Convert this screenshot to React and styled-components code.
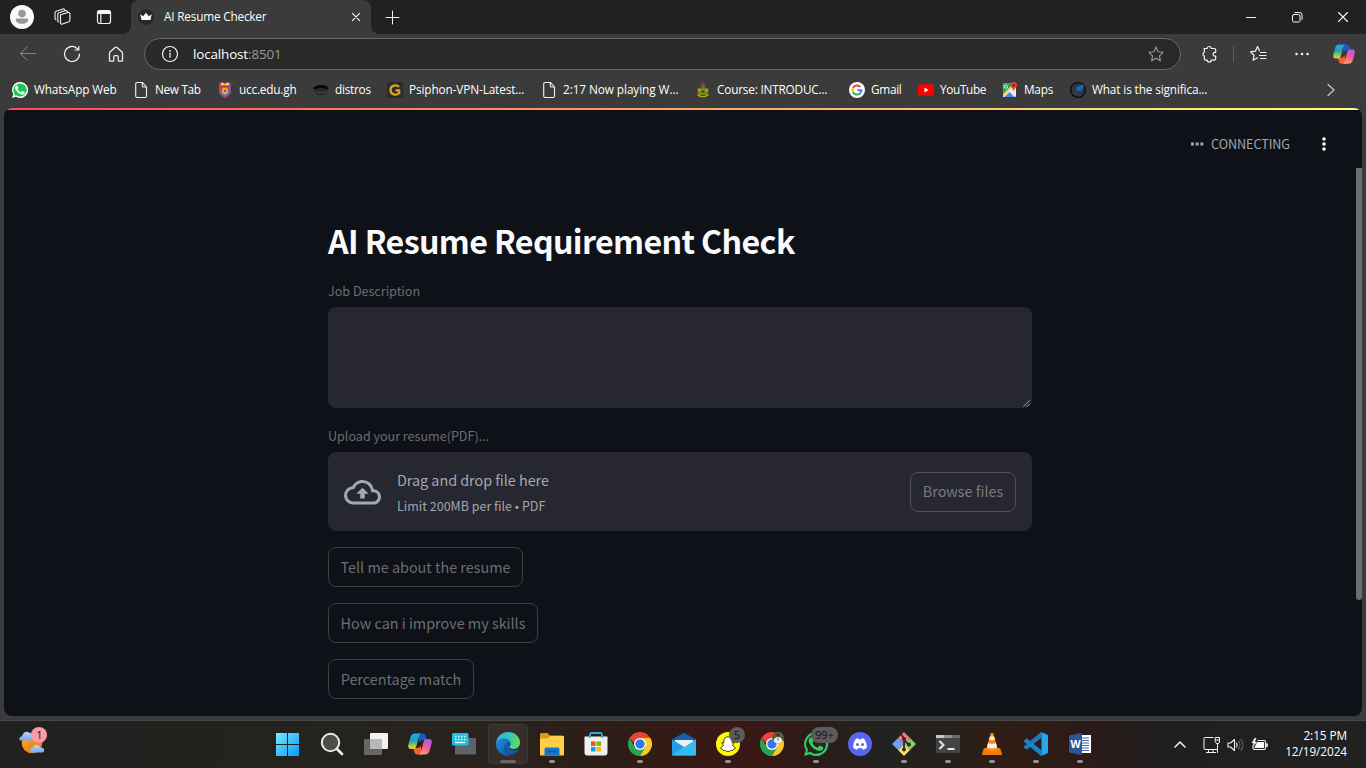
import React from "react";
import styled, { createGlobalStyle, css } from "styled-components";

const ui = `"Open Sans", "Noto Sans", sans-serif`;
const sourceSans = `"Noto Sans CJK JP", "Noto Sans", sans-serif`;

const Global = createGlobalStyle`
  * { box-sizing: border-box; }
  body { margin: 0; background: #3b3b3b; overflow: hidden; }
  svg { display: block; flex: none; overflow: visible; }
  button { font: inherit; color: inherit; background: none; border: 0; padding: 0; }
`;

const Screen = styled.div`
  width: 1366px;
  height: 768px;
  display: flex;
  flex-direction: column;
  background: #3b3b3b;
  color: #fff;
  font-family: ${ui};
  white-space: nowrap;
`;

/* ---------- browser chrome ---------- */

const TabStrip = styled.header`
  height: 34px;
  display: flex;
  align-items: center;
  background: #212121;
`;
const StripButton = styled.button`
  width: ${(p) => p.$w}px;
  height: 34px;
  display: flex;
  align-items: center;
  justify-content: center;
`;
const StripLead = styled.div`
  width: 131px;
  display: flex;
  padding-left: 1px;
`;
const Tab = styled.div`
  position: relative;
  width: 240px;
  height: 34px;
  padding: 0 8px 0 7px;
  display: flex;
  align-items: center;
  background: #3b3b3b;
  border-radius: 8px 8px 0 0;
  &::before,
  &::after {
    content: "";
    position: absolute;
    bottom: 0;
    width: 8px;
    height: 8px;
  }
  &::before {
    left: -8px;
    background: radial-gradient(circle at 0 0, #212121 7.5px, #3b3b3b 8px);
  }
  &::after {
    right: -8px;
    background: radial-gradient(circle at 100% 0, #212121 7.5px, #3b3b3b 8px);
  }
`;
const TabTitle = styled.span`
  flex: 1;
  margin-left: 10px;
  padding-bottom: 2px;
  font-size: 11.8px;
  line-height: 16px;
  letter-spacing: -0.2px;
`;
const WindowControls = styled.div`
  margin-left: auto;
  display: flex;
`;

const Toolbar = styled.div`
  height: 38px;
  padding: 2px 0 0 6px;
  display: flex;
  align-items: center;
`;
const ToolButton = styled.button`
  width: ${(p) => p.$w || 44}px;
  height: 32px;
  padding-left: ${(p) => p.$shift || 0}px;
  display: flex;
  align-items: center;
  justify-content: center;
`;
const AddressBar = styled.div`
  width: 1037px;
  height: 32px;
  margin: 0 0 0 6px;
  padding: 0 16px 0 17px;
  display: flex;
  align-items: center;
  border: 1px solid #686868;
  border-radius: 16px;
  background: #292929;
  font-size: 13.4px;
  line-height: 18px;
  letter-spacing: -0.12px;
`;
const Url = styled.span`
  flex: 1;
  margin-left: 15px;
  span { color: #9a9a9a; }
`;
const Divider = styled.i`
  width: 1px;
  height: 16px;
  background: #5c5c5c;
`;

const BookmarkBar = styled.nav`
  height: 36px;
  padding-left: 12px;
  display: flex;
  align-items: center;
`;
const Bookmark = styled.a`
  width: ${(p) => p.$w}px;
  display: flex;
  align-items: center;
  gap: 6px;
  font-size: 11.8px;
  line-height: 16px;
  letter-spacing: ${(p) => p.$ls}px;
`;
const BookmarkName = styled.span`
  padding-bottom: 2px;
`;

/* ---------- web page ---------- */

const Page = styled.main`
  position: relative;
  height: 608px;
  margin: 0 4px;
  overflow: hidden;
  border-radius: 8px;
  background: #0e1117;
  font-family: ${sourceSans};
`;
const Decoration = styled.div`
  height: 2px;
  background: linear-gradient(90deg, #ff4b4b, #fffd80);
`;
const PageHeader = styled.div`
  height: 58px;
  padding: 10px 26px 0 0;
  display: flex;
  align-items: center;
  justify-content: flex-end;
`;
const Status = styled.span`
  margin: 0 22px 0 7px;
  font-size: 12.6px;
  line-height: 20px;
  letter-spacing: -0.05px;
  color: #a3a8b4;
`;
const Column = styled.section`
  width: 704px;
  margin-left: 324px;
  padding-top: 48px;
  display: flex;
  flex-direction: column;
  align-items: flex-start;
`;
const Title = styled.h1`
  margin: 0 0 18px;
  height: 48px;
  font-size: 32.2px;
  line-height: 48px;
  font-weight: 700;
  letter-spacing: -0.64px;
  color: #fafafa;
`;
const Label = styled.label`
  height: 25px;
  font-size: 12.6px;
  line-height: 17px;
  letter-spacing: -0.02px;
  color: #6c6e72;
`;
const TextArea = styled.div`
  width: 704px;
  height: 101px;
  margin-bottom: 19px;
  padding: 0 2px 1px 0;
  display: flex;
  align-items: flex-end;
  justify-content: flex-end;
  border-radius: 8px;
  background: #262730;
`;
const Dropzone = styled.div`
  width: 704px;
  height: 79px;
  margin-bottom: 16px;
  padding: 0 16px;
  display: flex;
  align-items: center;
  border-radius: 8px;
  background: #262730;
`;
const DropText = styled.div`
  flex: 1;
  margin-left: 16px;
  padding-top: 2px;
  display: flex;
  flex-direction: column;
`;
const DropTitle = styled.span`
  font-size: 14.4px;
  line-height: 26px;
  letter-spacing: -0.04px;
  color: #a3a8b4;
`;
const DropHint = styled.span`
  font-size: 12.5px;
  line-height: 25px;
  color: #a4a5aa;
`;
const ActionButton = styled.button`
  && {
    width: ${(p) => p.$w}px;
    height: 40px;
    margin-bottom: ${(p) => (p.$inset ? 0 : 16)}px;
    padding-bottom: ${(p) => (p.$inset ? 2 : 0)}px;
    border: 1px solid ${(p) => (p.$inset ? "#50515a" : "#3c3f44")};
    border-radius: 8px;
    font-size: 14.4px;
    line-height: 24px;
    color: ${(p) => (p.$inset ? "#797a80" : "#6c6e72")};
  }
`;
const ScrollThumb = styled.div`
  position: absolute;
  right: 0;
  top: 60px;
  width: 6px;
  height: 432px;
  border-radius: 0 0 3px 3px;
  background: #6b6c70;
`;

/* ---------- taskbar ---------- */

const Taskbar = styled.footer`
  height: 48px;
  margin-top: 4px;
  display: flex;
  border-top: 1px solid #474747;
  background: linear-gradient(90deg, #212121 0, #24231e 330px, #29221d 500px, #2e1d16 620px,
    #3a1815 740px, #2c1c18 820px, #212320 885px, #27201c 950px, #2f1d15 1000px, #2b1b19 1095px, #211f1e 1150px, #212121 100%);
`;
const Weather = styled.div`
  width: 266px;
  padding: 6px 0 0 19px;
`;
const TaskbarApp = styled.div`
  position: relative;
  width: 44px;
  height: 47px;
  padding-bottom: 1px;
  display: flex;
  align-items: center;
  justify-content: center;
  ${(p) =>
    p.$active &&
    css`
      &::before {
        content: "";
        position: absolute;
        inset: 3px 2px 4px;
        border: 1px solid #403834;
        border-radius: 4px;
        background: #352e2a;
      }
    `}
  ${(p) =>
    p.$running &&
    css`
      &::after {
        content: "";
        position: absolute;
        bottom: 5px;
        left: ${p.$active ? 14 : 19}px;
        width: ${p.$active ? 16 : 6}px;
        height: 3px;
        border-radius: 2px;
        background: ${p.$active ? "#6a6461" : "#989391"};
      }
    `}
  svg { position: relative; }
`;
const Badge = styled.span`
  position: absolute;
  top: 6px;
  left: ${(p) => (p.$wide ? 17 : 23)}px;
  height: 16px;
  min-width: 16px;
  padding: 0 ${(p) => (p.$wide ? 4 : 0)}px;
  border-radius: 8px;
  background: #5c5c5c;
  color: #111;
  text-align: center;
  font-size: 11px;
  line-height: 16px;
`;
const Tray = styled.div`
  margin-left: auto;
  padding-right: 19px;
  display: flex;
  align-items: center;
`;
const TrayIcons = styled.div`
  display: flex;
  align-items: center;
  gap: 7px;
  margin: 0 16px 0 17px;
`;
const Clock = styled.div`
  width: 63px;
  text-align: right;
  font-size: 11.8px;
  line-height: 16px;
  letter-spacing: -0.08px;
  padding-bottom: 3px;
`;

/* ---------- icons ---------- */

const Line = ({ size = 16, w, h, vb, sw = 1, color = "#f4f4f4", children, ...rest }) => (
  <svg width={w || size} height={h || size} viewBox={vb || `0 0 ${w || size} ${h || size}`} fill="none"
    stroke={color} strokeWidth={sw} strokeLinecap="round" strokeLinejoin="round" {...rest}>
    {children}
  </svg>
);

const Profile = () => (
  <svg width="24" height="24" viewBox="0 0 24 24">
    <circle cx="12" cy="12" r="12" fill="#fafafa" />
    <circle cx="12" cy="8.6" r="3.8" fill="#989898" />
    <path d="M6.8 13.5h10.4c.7 0 1 .6 1 1.2 0 2.500-2.600 4-6.200 4s-6.200-1.500-6.200-4c0-.6.3-1.200 1-1.200z" fill="#989898" />
  </svg>
);
const Workspaces = () => (
  <Line size={18} sw={1.1}>
    <path d="M7.500 6.800 15 4.500c1-.3 1.900.2 1.900 1.300v6.500c0 .8-.4 1.300-1.100 1.500l-6.400 2.300c-1 .3-1.900-.3-1.900-1.300zM14.300 3.500c-.2-.8-.9-1.100-1.700-.9L6 4.700c-.7.2-1.200.8-1.200 1.600v6.600c0 .7.3 1 .8 1.200M11.500 1.600C11.200.9 10.600.8 10 1L3.300 3.200C2.500 3.500 2 4 2 4.800v5.600c0 .7.400 1.100 1 1.300" />
  </Line>
);
const TabMenu = () => (
  <Line size={16} sw={1.2}>
    <rect x="1.500" y="1.500" width="13" height="13" rx="2.300" />
    <path d="M4.800 5v9.500" />
    <path d="M1.500 3.800c0-1.500 1-2.300 2.300-2.300h8.400c1.500 0 2.300.9 2.300 2.300v.7h-13z" fill="#f4f4f4" />
  </Line>
);
const Crown = () => (
  <svg width="16" height="16" viewBox="0 0 16 16">
    <circle cx="8" cy="8" r="8" fill="#262730" />
    <path d="m2.300 5.300 2.900 2 2.800-3.500 2.800 3.500 2.900-2-1.200 5.700h-9z" fill="#fafafa" />
  </svg>
);
const Close = ({ size = 10, sw = 1.2 }) => (
  <Line size={size} vb="0 0 10 10" sw={sw}><path d="m.5.500 9 9m0-9-9 9" /></Line>
);
const Ext = () => (
  <Line size={18} sw={1.200}>
    <path d="M3 3.500h3.200a2 2 0 0 1 4 0h3.100c.9 0 1.400.5 1.400 1.400v2.400h-.7a1.900 1.900 0 0 0 0 3.800h.7v2.600c0 .9-.5 1.400-1.400 1.400h-3.100a2 2 0 0 1-4 0H4.700c-.9 0-1.400-.5-1.400-1.400v-2.600a2 2 0 0 1 0-3.800V4.900c0-.9.4-1.400 1-1.400" />
  </Line>
);
const starPath = "m8 1 2.100 4.700 5 .6-3.700 3.500 1 5L8 12.300l-4.400 2.500 1-5L.9 6.300l5-.6z";
const Ribbon = ({ size = 24 }) => (
  <svg width={size} height={size} viewBox="0 0 24 24">
    <defs>
      <linearGradient id="rb1" x1="0" y1="0" x2="0" y2="1">
        <stop offset="0" stopColor="#24a9f5" /><stop offset=".45" stopColor="#18a4b8" /><stop offset=".75" stopColor="#8dc94d" /><stop offset="1" stopColor="#ffc829" />
      </linearGradient>
      <linearGradient id="rb2" x1=".7" y1="0" x2=".3" y2="1">
        <stop offset="0" stopColor="#a95cf0" /><stop offset=".5" stopColor="#f05a9a" /><stop offset="1" stopColor="#ffa05c" />
      </linearGradient>
    </defs>
    <path d="M10 1.500h4.800c1.900 0 2.500 1.200 3 2.900L18.700 8h-3.800c-2 0-2.900 1-3.400 2.700z" fill="#1759d2" />
    <path d="M14 22.500H9.200c-1.900 0-2.500-1.200-3-2.900L5.300 16h3.800c2 0 2.900-1 3.400-2.700z" fill="#f4603b" />
    <path d="M6.800 1.500h6.400c-1.400.5-2 2.300-2.500 4L8.300 14.600C7.800 16.300 7 17 5.300 17H3C.7 17-.3 15.100.3 13L2.500 5C3.200 2.700 4.700 1.500 6.800 1.500z" fill="url(#rb1)" />
    <path d="M17.200 22.500h-6.400c1.400-.5 2-2.300 2.500-4l2.400-9.100c.5-1.700 1.300-2.400 3-2.400H21c2.300 0 3.300 1.900 2.700 4L21.500 19c-.7 2.300-2.200 3.500-4.300 3.500z" fill="url(#rb2)" />
  </svg>
);
const phone = "M8.800 6.800c-.3-.7-.6-.7-.9-.7h-.8c-.3 0-.7.1-1.100.5-.4.400-1.400 1.400-1.400 3.300s1.400 3.800 1.600 4c.2.300 2.700 4.300 6.700 5.900 3.300 1.300 4 1 4.700.9.700-.1 2.300-.9 2.600-1.900.3-.9.300-1.700.2-1.900-.1-.2-.4-.3-.8-.5l-2.600-1.300c-.4-.1-.6-.2-.9.200l-1.300 1.600c-.2.300-.5.300-.9.100s-1.600-.6-3.100-1.900c-1.100-1-1.900-2.300-2.100-2.600-.2-.4 0-.6.2-.8l.6-.7.4-.7c.1-.3.100-.5 0-.7z";
const WhatsApp = ({ size, filled }) => (
  <svg width={size} height={size} viewBox="0 0 26 26">
    <path d="M13 0a13 13 0 0 0-11 19.700L0 26l6.500-1.900A13 13 0 1 0 13 0z" fill={filled ? "#f5fff7" : "#25d366"} />
    <path d="M13 2.400a10.600 10.600 0 0 0-8.700 16.700L3.500 22.500l3.400-1A10.600 10.600 0 1 0 13 2.400z" fill={filled ? "#19c655" : "#34201b"} />
    <path d={phone} fill={filled ? "#fff" : "#25d366"} transform="translate(.4 -.3)" />
  </svg>
);
const FileIcon = () => (
  <Line size={16} sw={1.100}>
    <path d="M4 .5h5.500L13.500 5v9c0 .8-.5 1.500-1.300 1.500H4c-.8 0-1.300-.7-1.300-1.500V2C2.700 1.200 3.200.5 4 .5zM9.300.5v3.300c0 .8.4 1.200 1.200 1.200h3" />
  </Line>
);
const Shield = () => (
  <svg width="16" height="16" viewBox="0 0 16 16">
    <path d="M2 0c1 1 2.500 1 3.500 0 1.500 1 3.500 1 5 0 1 1 2.500 1 3.500 0v9c0 3.500-2.500 5.500-6 7-3.500-1.500-6-3.500-6-7z" fill="#3e62ad" />
    <path d="M2.500.8h11v4h-11z" fill="#ed2e34" /><path d="M4 .8h2l2 1.500 2-1.500h2v2.400H4z" fill="#ffd529" />
    <path d="M2.500 5.500h1.500v6l4 3 4-3v-6h1.500v6L8 15.500l-5.500-4z" fill="#e03e50" /><path d="M4.500 5.500h7v6L8 14l-3.500-2.500z" fill="#6c86c4" />
    <circle cx="8" cy="8.800" r="2.900" fill="#fbb62c" /><circle cx="8" cy="8.800" r="1.400" fill="#db392f" />
  </svg>
);
const Cap = () => (
  <svg width="16" height="16" viewBox="0 0 16 16">
    <path d="M1.500 6.500h13l-.8 4.500c-1.500 2.700-9.900 2.700-11.400 0z" fill="#292929" />
    <path d="M0 6.200c2.500-4.200 13.500-4.200 16 0-1 0-1.300 1.300-2.600 1-2-1.400-8.800-1.400-10.800 0C1.300 7.500 1 6.200 0 6.200z" fill="#070707" />
    <path d="M3.500 9.800c3 1.200 6 1.200 9 0" stroke="#4b4b4b" fill="none" />
  </svg>
);
const GoldG = () => (
  <svg width="16" height="16" viewBox="0 0 16 16">
    <rect width="16" height="16" rx="1" fill="#2b2b2c" />
    <path d="M12 4.900C9.500 2.200 3.500 3 3.500 8s6 5.800 8.700 3.200V8.400H8.500" fill="none" stroke="#dba520" strokeWidth="2.300" />
  </svg>
);
const Crest = () => (
  <svg width="16" height="16" viewBox="0 0 16 16">
    <path d="M2.500 6.500 8 6l5.500.5c.2 3-.5 5-2 6.500h-7c-1.500-1.500-2.200-3.500-2-6.500z" fill="#8f8318" />
    <path d="M4 7.500h8L8 12z" fill="#3c9b3a" /><path d="M5.500 3h5l-.5 3H6z" fill="#5c6269" /><circle cx="8" cy="2" r="1.500" fill="#c82929" />
    <path d="M2.500 12.500c3 3 8 3 11 0" stroke="#c9b32c" fill="none" strokeWidth="1.200" /><path d="M6.500 9h3v1.200h-3z" fill="#2c2619" />
    <path d="M3.500 7.500 6 9M12.500 7.500 10 9" stroke="#dccb33" />
  </svg>
);
const Google = () => (
  <svg width="16" height="16" viewBox="0 0 16 16" fill="none" strokeWidth="2">
    <circle cx="8" cy="8" r="8" fill="#fff" />
    <path d="M11.300 5A4.500 4.500 0 0 0 4 6" stroke="#ea4335" /><path d="M4 6a4.500 4.500 0 0 0 0 4.200" stroke="#fbbc05" />
    <path d="M4 10.200a4.500 4.500 0 0 0 7 1.200" stroke="#34a853" /><path d="M11 11.400a4.500 4.500 0 0 0 1.400-3.200H8.200" stroke="#4285f4" />
  </svg>
);
const YouTube = () => (
  <svg width="16" height="16" viewBox="0 0 16 16">
    <rect y="2.300" width="16" height="11.400" rx="2.800" fill="#f00" /><path d="m6.400 5.600 4.200 2.400-4.200 2.400z" fill="#fff" />
  </svg>
);
const Maps = () => (
  <svg width="16" height="16" viewBox="0 0 16 16">
    <rect x="1" y="1.500" width="13" height="13.500" rx="1.200" fill="#ececec" /><path d="M1.500 1.500H13L1 13z" fill="#1da261" />
    <path d="M1 12 11 2l1.500 1.500L3 13.500 1.500 15H1z" fill="#ffd351" /><path d="m2.500 15 5-5 5 5z" fill="#4285f4" />
    <circle cx="4" cy="4.700" r="1.600" stroke="#e6f4ea" fill="none" />
    <path d="M11.700 0a3.300 3.300 0 0 1 3.300 3.300c0 2-2.500 3-3.300 6-.8-3-3.300-4-3.300-6A3.300 3.300 0 0 1 11.700 0z" fill="#e44134" /><circle cx="11.700" cy="3.300" r="1.200" fill="#7a1713" />
  </svg>
);
const BlueDisc = () => (
  <svg width="16" height="16" viewBox="0 0 16 16">
    <circle cx="8" cy="8" r="7.400" fill="#33363b" stroke="#0b0b0d" strokeWidth="1.200" />
    <path d="M6.300 5.500 12.500 2.800c1 .3 1.500 1 1.500 1.700L10.800 9.500 9 8.300 7 9.500z" fill="#0b6bd3" />
  </svg>
);
const Upload = () => (
  <svg width="37" height="37" viewBox="0 -.5 24 24" fill="#a3a8b8">
    <path d="M19.350 10.040A7.490 7.490 0 0 0 12 4C9.110 4 6.600 5.640 5.350 8.040A5.994 5.994 0 0 0 0 14c0 3.310 2.690 6 6 6h13c2.760 0 5-2.240 5-5 0-2.640-2.050-4.780-4.650-4.960zM19 18H6c-2.210 0-4-1.790-4-4 0-2.050 1.530-3.760 3.560-3.970l1.070-.11.500-.95A5.469 5.469 0 0 1 12 6c2.620 0 4.880 1.860 5.390 4.430l.3 1.500 1.530.11A2.980 2.980 0 0 1 22 15c0 1.650-1.350 3-3 3zM8 13h2.550v3h2.900v-3H16l-4-4z" />
  </svg>
);
const WeatherIcon = () => (
  <svg width="29" height="29" viewBox="0 0 29 29">
    <defs><linearGradient id="sun" x1="0" y1="0" x2="1" y2="1"><stop stopColor="#f8b332" /><stop offset="1" stopColor="#ec6c13" /></linearGradient>
      <linearGradient id="cl" x1="0" y1="0" x2="0" y2="1"><stop stopColor="#b8d2f8" /><stop offset="1" stopColor="#7ba6ed" /></linearGradient></defs>
    <circle cx="13" cy="16" r="10.300" fill="url(#sun)" />
    <path d="M1 13.500c-1.500-2 0-4 2-4C4 4 10 3 12 8l4 5.500z" fill="url(#cl)" />
    <path d="M12 25.500c-2.500-2-.5-4.500 1.500-4.200 1-4.300 6.500-4.800 8-.8 3.500-.3 5 3.300 2.500 5z" fill="url(#cl)" />
    <circle cx="20" cy="8" r="8" fill="#ff99a4" />
    <text x="20.300" y="12" fontFamily="Open Sans, sans-serif" fontSize="11" textAnchor="middle" fill="#171717">1</text>
  </svg>
);
const Windows = () => (
  <svg width="24" height="24" viewBox="0 0 24 24">
    <defs><linearGradient id="win" gradientUnits="userSpaceOnUse" x1="0" y1="0" x2="24" y2="24"><stop stopColor="#76edff" /><stop offset=".5" stopColor="#3cc2fb" /><stop offset="1" stopColor="#0798ff" /></linearGradient></defs>
    <path d="M0 1h11v11H0zM12 1h11v11H12zM0 13h11v11H0zM12 13h11v11H12z" fill="url(#win)" />
  </svg>
);
const Search = () => (
  <Line size={24} sw={2} color="#e9e9e9"><circle cx="10.500" cy="10.500" r="8.700" fill="#4c4c49" /><path d="m17 17 5 5" strokeWidth="2.800" color="#ddd" /></Line>
);
const TaskView = () => (
  <svg width="24" height="24" viewBox="0 0 24 24"><rect x="6" y="1" width="18" height="16" rx="1" fill="#f2f2f2" /><rect y="7" width="18" height="16" rx="1" fill="#666" /><path d="M6 7h12v10H6z" fill="#b9b9b9" /></svg>
);
const Keyboard = () => (
  <svg width="24" height="24" viewBox="0 0 24 24">
    <rect x="3" y="6" width="21" height="16.500" rx="1" fill="#5b636b" />
    <rect y="1" width="16.500" height="12.500" rx="1.500" fill="#25bfdc" />
    <path d="M3 4.500h11M3 7.500h11" stroke="#e9fcff" strokeWidth="1.500" strokeDasharray="1.500 1.500" /><path d="M3 10.500h10" stroke="#e9fcff" strokeWidth="1.300" />
  </svg>
);
const Edge = () => (
  <svg width="24" height="24" viewBox="0 0 24 24">
    <defs><linearGradient id="eg1" x1="0" y1=".4" x2="1" y2=".5"><stop stopColor="#2bb0e8" /><stop offset=".55" stopColor="#36c7bd" /><stop offset="1" stopColor="#65e04c" /></linearGradient>
      <linearGradient id="eg2" x1="0" y1="0" x2="1" y2="1"><stop stopColor="#2193dc" /><stop offset="1" stopColor="#0c4ba4" /></linearGradient></defs>
    <path d="M12 0c7 0 12 5 12 10.500 0 4-3 6.500-6.500 6.500-2.700 0-4.300-1-4.300-2.200 0-.8 1.200-1.200 1.200-3.100 0-2.700-2.800-5-6.600-5C3.500 6.700.3 9.500 0 12 0 5.500 5.400 0 12 0z" fill="url(#eg1)" />
    <path d="M0 12c.3-2.500 3.500-5.600 8-5.500 3.500 0 6 2 6.400 4.500-1-.7-5.600-.3-6.100 4-.5 4.500 4 8.300 8.700 7.600-1.500.9-3.300 1.400-5 1.400C5.400 24 0 18.600 0 12z" fill="url(#eg2)" />
    <path d="M8.300 15c0 4 3.700 7.600 8.700 7.600 2-.8 4-2.500 5-4.600.2-.5-.1-.7-.5-.5-5.500 2.500-9.500-.5-8.300-2.700-.8-1-.5-2.300.4-3.200-2.400-.5-5.300.4-5.300 3.400z" fill="#125bb5" />
  </svg>
);
const Folder = () => (
  <svg width="24" height="24" viewBox="0 0 24 24">
    <path d="M0 2.500C0 1.700.6 1 1.500 1h6L10 3.500h12c1 0 2 .7 2 2V8H0z" fill="#d89a10" /><path d="M0 6.500h8L10.500 4H24v18.500c0 .5-.5 1-1 1H1a1 1 0 0 1-1-1z" fill="#ffcf48" />
    <path d="M4.500 23.500v-6c0-1.500 1-2 2-2h11c1 0 2 .5 2 2v6z" fill="#1478c9" /><path d="M8 19.500h8" stroke="#0b579d" strokeWidth="1.500" />
  </svg>
);
const Store = () => (
  <svg width="24" height="24" viewBox="0 0 24 24">
    <path d="M6 6V2.500C6 1.600 6.600 1 7.500 1h9c.9 0 1.500.6 1.500 1.500V6" fill="none" stroke="#29a9e8" strokeWidth="1.800" />
    <path d="M.5 4.500h23v16a3 3 0 0 1-3 3h-17a3 3 0 0 1-3-3z" fill="#f0f0f0" /><path d="M6 4v2M18 4v2" stroke="#29a9e8" strokeWidth="1.800" />
    <path d="M7 9.500h4.500V14H7z" fill="#f25022" /><path d="M12.500 9.500H17V14h-4.500z" fill="#7fba00" /><path d="M7 15h4.500v4.500H7z" fill="#00a4ef" /><path d="M12.500 15H17v4.500h-4.500z" fill="#ffb900" />
  </svg>
);
const Chrome = ({ avatar }) => (
  <svg width="24" height="24" viewBox="0 0 24 24">
    <path d="M1.600 6A12 12 0 0 1 22.400 6L17 12H7z" fill="#e94435" /><path d="M1.600 6A12 12 0 0 0 12 24l5.200-9L12 17.500 6.800 15z" fill="#2aa34f" />
    <path d="M22.400 6H12l5.200 9L12 24A12 12 0 0 0 22.400 6z" fill="#fcc727" /><circle cx="12" cy="12" r="6" fill="#fff" /><circle cx="12" cy="12" r="4.700" fill="#3478e8" />
    {avatar && <g><circle cx="18" cy="5.500" r="5.800" fill="#59603f" /><circle cx="18" cy="2.800" r="1.600" fill="#3a2c24" /><path d="M13.800 9.500c-.3-6 8.700-6 8.400 0-2 2-6.400 2-8.400 0z" fill="#f2eef0" /><path d="M18 5.500v3" stroke="#555" /></g>}
  </svg>
);
const Mail = () => (
  <svg width="24" height="24" viewBox="0 0 24 24">
    <path d="M0 7.500 11 1.200c.7-.4 1.300-.4 2 0l11 6.300v4H0z" fill="#1560a9" /><path d="M3 8h18v6l-9 4-9-4z" fill="#edf1f4" /><path d="M0 7.500 24 22c0 1-.6 1.500-1.500 1.500h-21C.6 23.500 0 23 0 22z" fill="#239fe6" /><path d="M24 7.500v14.500c0 1-.6 1.500-1.500 1.500h-21L0 23z" fill="#35b9f1" />
  </svg>
);
const Snap = () => (
  <svg width="24" height="24" viewBox="0 0 24 24">
    <circle cx="12" cy="12" r="12" fill="#fffc00" />
    <path d="M12 4.800c2.700 0 4.200 2 4.200 4.300v2l1.700-.5.300.9-1.600 1.200c.6 1.700 1.600 2.800 3 3.300-.2 1.100-1.500 1-2.300 1.400l-.5 1.100c-1.500-.3-2.200-.2-3 .5-.9.700-2.600.7-3.600 0-.8-.7-1.500-.8-3-.5l-.5-1.100c-.8-.4-2.100-.3-2.300-1.400 1.400-.5 2.400-1.600 3-3.300l-1.600-1.200.3-.9 1.700.5v-2c0-2.300 1.500-4.300 4.200-4.300z" fill="#fff" stroke="#151500" strokeWidth=".8" />
  </svg>
);
const Discord = () => (
  <svg width="24" height="24" viewBox="0 0 24 24">
    <circle cx="12" cy="12" r="12" fill="#5865f2" />
    <path d="M8 6.800 10 6.200l.6 1h2.800l.6-1 2 .6c2 2.400 3 5.500 2.800 9-1.200.9-2.400 1.500-3.800 1.900l-.9-1.400h-4.200L9 17.700c-1.400-.4-2.600-1-3.800-1.900C5 12.300 6 9.200 8 6.800z" fill="#fff" />
    <circle cx="9.500" cy="12.400" r="1.500" fill="#5865f2" /><circle cx="14.500" cy="12.400" r="1.500" fill="#5865f2" />
  </svg>
);
const Git = () => (
  <svg width="24" height="24" viewBox="0 0 24 24">
    <path d="m12 0 6 6-6 6-6-6z" fill="#f4787b" /><path d="m18 6 6 6-6 6-6-6z" fill="#82cf62" /><path d="m12 12 6 6-6 6-6-6z" fill="#fae06b" /><path d="m6 6 6 6-6 6-6-6z" fill="#729df8" />
    <path d="M9 2.500 12 6v12M12 8l5 5" stroke="#302b29" strokeWidth="1.800" fill="none" /><circle cx="12" cy="7" r="2" fill="#302b29" /><circle cx="17" cy="12.500" r="2" fill="#302b29" /><circle cx="12" cy="17.500" r="2" fill="#302b29" />
  </svg>
);
const Terminal = () => (
  <svg width="24" height="24" viewBox="0 0 24 24"><rect y="3" width="24" height="18" rx="1" fill="#444" /><path d="M0 3h8v3H0z" fill="#c7c7c7" /><path d="M8 3h8v3H8z" fill="#909090" /><path d="M16 3h8v3h-8z" fill="#6d6d6d" /><path d="m3.500 9 4 4-4 4M11.500 17h7" stroke="#e7e7e7" strokeWidth="2" fill="none" /></svg>
);
const Vlc = () => (
  <svg width="24" height="24" viewBox="0 0 24 24">
    <path d="M4 16h16l2 6c0 .5-.3 1-1 1H3c-.7 0-1-.5-1-1z" fill="#f47b11" /><path d="M10.800 1h2.400l4.800 17c-2 2-10 2-12 0z" fill="#ff890f" /><path d="M9.900 4.500h4.200l.8 3c-1.500.8-4.300.8-5.800 0zM8 11c2 1.200 6 1.200 8 0l1.200 4.300c-2.500 1.600-7.900 1.600-10.400 0z" fill="#f1f1f1" />
  </svg>
);
const VsCode = () => (
  <svg width="24" height="24" viewBox="0 0 24 24">
    <path d="M17.500 0v5.800L3 17.500 1.700 17 0 15.300v-1L17 0z" fill="#2079b8" /><path d="M17.500 24v-5.800L3 6.500 1.700 7 0 8.700v1L17 24z" fill="#1583c9" /><path d="m17 0 6 2.500c.6.300 1 .8 1 1.500v16c0 .7-.4 1.200-1 1.500L17 24c.5-.4.5-1 .5-1.500v-21c0-.6 0-1-.5-1.500z" fill="#28a5ed" />
  </svg>
);
const Word = () => (
  <svg width="24" height="24" viewBox="0 0 24 24">
    <path d="M11 3h12v18H11z" fill="#fff" /><path d="M13 6h8M13 8.500h8M13 11h8M13 13.500h8M13 16h8M13 18.500h8" stroke="#4263a6" /><path d="M1 3.500 14 1v22L1 20.500z" fill="#2b5797" />
    <text x="7.500" y="16" textAnchor="middle" fontFamily="Open Sans, sans-serif" fontWeight="700" fontSize="10.500" fill="#fff">W</text>
  </svg>
);

const bookmarks = [
  [121, <WhatsApp size={16} filled />, "WhatsApp Web", -0.14],
  [84, <FileIcon />, "New Tab", -0.32],
  [96, <Shield />, "ucc.edu.gh", -0.2],
  [74, <Cap />, "distros", -0.25],
  [154, <GoldG />, "Psiphon-VPN-Latest...", -0.12],
  [154, <FileIcon />, "2:17 Now playing W...", -0.08],
  [154, <Crest />, "Course: INTRODUC...", -0.2],
  [69, <Google />, "Gmail", -0.3],
  [84, <YouTube />, "YouTube", -0.35],
  [68, <Maps />, "Maps", -0.25],
  [257, <BlueDisc />, "What is the significa...", -0.13],
];

const apps = [
  { icon: <Windows /> },
  { icon: <Search /> },
  { icon: <TaskView /> },
  { icon: <Ribbon size={24} /> },
  { icon: <Keyboard /> },
  { icon: <Edge />, active: true, running: true },
  { icon: <Folder />, running: true },
  { icon: <Store /> },
  { icon: <Chrome />, running: true },
  { icon: <Mail /> },
  { icon: <Snap />, running: true, badge: "5" },
  { icon: <Chrome avatar /> },
  { icon: <WhatsApp size={24} />, running: true, badge: "99+" },
  { icon: <Discord /> },
  { icon: <Git />, running: true },
  { icon: <Terminal />, running: true },
  { icon: <Vlc />, running: true },
  { icon: <VsCode />, running: true },
  { icon: <Word />, running: true },
];

export default function App() {
  return (
    <Screen>
      <Global />
      <TabStrip>
        <StripLead>
          <StripButton $w={42}><Profile /></StripButton>
          <StripButton $w={38}><Workspaces /></StripButton>
          <StripButton $w={46}><TabMenu /></StripButton>
        </StripLead>
        <Tab>
          <Crown />
          <TabTitle>AI Resume Checker</TabTitle>
          <StripButton $w={14}><Close size={8} sw={1.4} /></StripButton>
        </Tab>
        <StripButton $w={43}><Line size={13}><path d="M6.500 0v13M0 6.500h13" /></Line></StripButton>
        <WindowControls>
          <StripButton $w={46}><Line size={10}><path d="M.5 5.500h9" /></Line></StripButton>
          <StripButton $w={46}>
            <Line size={10}><rect x=".5" y="2.500" width="7.500" height="7.500" rx="1.500" /><path d="M3 .5h4.800A2.200 2.200 0 0 1 10 2.700v4.800" /></Line>
          </StripButton>
          <StripButton $w={46}><Close sw={1.100} /></StripButton>
        </WindowControls>
      </TabStrip>

      <Toolbar>
        <ToolButton><Line size={16} color="#858585"><path d="M15.500 7.500H.5M7 1 .5 7.500 7 14" /></Line></ToolButton>
        <ToolButton><Line size={18} sw={1.200}><path d="M16.500 9A7.500 7.500 0 1 1 14 3.400l1.500 1.500M15.800 1.500V5h-3.600" /></Line></ToolButton>
        <ToolButton><Line size={16} sw={1.200}><path d="M1.500 7.200c0-.5.200-.9.500-1.200l5-4.500c.6-.5 1.400-.5 2 0l5 4.500c.3.300.5.700.5 1.200v7c0 .7-.4 1-1 1h-2.300c-.6 0-1-.3-1-1v-3.500c0-.6-.4-1-1-1H6.800c-.6 0-1 .4-1 1v3.500c0 .7-.4 1-1 1H2.500c-.6 0-1-.3-1-1z" /></Line></ToolButton>
        <AddressBar>
          <Line size={16} sw={1.200}><circle cx="8" cy="8" r="7.500" /><path d="M8 7.300v4" /><path d="M8 4.800v.1" strokeWidth="1.700" /></Line>
          <Url>localhost<span>:8501</span></Url>
          <Line size={16} sw={1.100} color="#9a9a9a"><path d={starPath} /></Line>
        </AddressBar>
        <ToolButton $w={52} $shift={6}><Ext /></ToolButton>
        <Divider />
        <ToolButton $w={47}>
          <Line size={18} sw={1.200}><path d="M8.500 12.800 4.200 15.200l.9-5L1.500 6.900l4.900-.7L8.500 1.500l2 4.200M11.500 7.500H17M10.500 10.500H17M11.500 13.500H17" /></Line>
        </ToolButton>
        <ToolButton $w={41}><Line w={14} h={4} sw={2.400}><path d="M1.500 2h.1M7 2h.1M12.500 2h.1" /></Line></ToolButton>
        <ToolButton $w={44}><Ribbon size={22} /></ToolButton>
      </Toolbar>

      <BookmarkBar>
        {bookmarks.map(([w, icon, text, ls]) => (
          <Bookmark key={text} $w={w} $ls={ls}>{icon}<BookmarkName>{text}</BookmarkName></Bookmark>
        ))}
        <Line w={8} h={12} sw={1.200} color="#ccc"><path d="m1 .5 6 5.500-6 5.500" /></Line>
      </BookmarkBar>

      <Page>
        <Decoration />
        <PageHeader>
          <svg width="13" height="4" viewBox="0 0 13 4" fill="#a3a8b4"><path d="M0 .5h3v3H0zM4.700.5h3v3h-3zM9.400.5h3v3h-3z" /></svg>
          <Status>CONNECTING</Status>
          <Line w={24} h={14} sw={3.600} color="#fafafa"><path d="M12 2v.01M12 7v.01M12 12v.01" /></Line>
        </PageHeader>
        <Column>
          <Title>AI Resume Requirement Check</Title>
          <Label>Job Description</Label>
          <TextArea><Line size={7} color="#a0a1a5" sw={0.9}><path d="m.5 6.500 6-6M4 6.500 6.500 4" /></Line></TextArea>
          <Label>Upload your resume(PDF)...</Label>
          <Dropzone>
            <Upload />
            <DropText>
              <DropTitle>Drag and drop file here</DropTitle>
              <DropHint>Limit 200MB per file • PDF</DropHint>
            </DropText>
            <ActionButton $w={106} $inset>Browse files</ActionButton>
          </Dropzone>
          <ActionButton $w={195}>Tell me about the resume</ActionButton>
          <ActionButton $w={210}>How can i improve my skills</ActionButton>
          <ActionButton $w={146}>Percentage match</ActionButton>
        </Column>
        <ScrollThumb />
      </Page>

      <Taskbar>
        <Weather><WeatherIcon /></Weather>
        {apps.map((a, i) => (
          <TaskbarApp key={i} $active={a.active} $running={a.running}>
            {a.icon}
            {a.badge && <Badge $wide={a.badge.length > 1}>{a.badge}</Badge>}
          </TaskbarApp>
        ))}
        <Tray>
          <Line w={12} h={7} sw={1.500}><path d="m1 6 5-5 5 5" /></Line>
          <TrayIcons>
            <Line w={17} h={16}><path d="M10 .5H2c-.6 0-1 .4-1 1v10c0 .6.400 1 1 1h12.500V7M5.500 12.500V15M10 12.500V15M3.500 15.500h9M12.500.5h4V5l-1 1.500h-2L12.500 5zM12.500 3h4M14.500 6.500v9" /></Line>
            <Line w={17} h={14} sw={1.100}><path d="M1 5h2.500L7.500 1.500v11L3.500 9H1zM9.500 5c.8 1.200.8 2.800 0 4" /><path d="M11.500 3.200c2 2.200 2 5.400 0 7.600M13.800 1.500c3 3.300 3 7.700 0 11" stroke="#6b6b6b" /></Line>
            <Line w={17} h={14} sw={1.100}><path d="M7 2.500h6c1 0 1.500.5 1.500 1.500v6c0 1-.5 1.500-1.500 1.500H3.500C2.500 11.500 2 11 2 10V8" /><path d="M6.500 4.500h6v5H4z" fill="#fff" /><path d="M16 6v2.500" strokeWidth="1.600" /><path d="M3.500.5 1 5h2l-1 3.500L5.500 4h-2L5 .5z" fill="#fff" strokeWidth=".5" /></Line>
          </TrayIcons>
          <Clock>2:15 PM<br />12/19/2024</Clock>
        </Tray>
      </Taskbar>
    </Screen>
  );
}
